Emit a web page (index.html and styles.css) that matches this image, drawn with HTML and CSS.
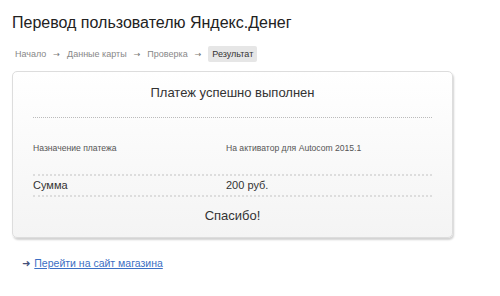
FILE: index.html
```html
<!DOCTYPE html>
<html>

<head>
    <meta charset="utf-8">
    <link rel="stylesheet" href="styles.css">
</head>

<body>
    <h1 class="title">Перевод пользователю Яндекс.Денег</h1>

    <div class="steps">
        <span class="step">Начало</span>
        <span class="arrow">&rarr;</span>
        <span class="step">Данные карты</span>
        <span class="arrow">&rarr;</span>
        <span class="step">Проверка</span>
        <span class="arrow">&rarr;</span>
        <span class="step current">Результат</span>
    </div>

    <div class="card">
        <div class="card-head">Платеж успешно выполнен</div>
        <div class="row small">
            <span class="label">Назначение платежа</span>
            <span class="value">На активатор для Autocom 2015.1</span>
        </div>
        <div class="row sum">
            <span class="label">Сумма</span>
            <span class="value">200 руб.</span>
        </div>
        <div class="thanks">Спасибо!</div>
    </div>

    <div class="back">
        <span class="back-arrow">&#10140;</span>
        <a href="#">Перейти на сайт магазина</a>
    </div>
</body>

</html>
```

FILE: styles.css
```css
body {
    margin: 0;
    padding: 0 12px;
    font-family: Arial, "Liberation Sans", sans-serif;
    color: #333;
    background: #fff;
}

* {
    box-sizing: border-box;
}

/* Page title */

.title {
    margin: 0;
    padding-top: 12px;
    font-size: 16px;
    font-weight: normal;
    color: #222;
    line-height: 22px;
}

/* Steps of the payment */

.steps {
    display: flex;
    align-items: center;
    margin-top: 12px;
    padding-left: 3px;
    font-size: 9px;
    color: #888;
    height: 16px;
}

.arrow {
    margin: 0 7px;
    font-family: "DejaVu Sans", sans-serif;
    font-size: 8px;
    color: #777;
}

.step.current {
    background: #e6e6e6;
    color: #333;
    padding: 3px 4px;
    border-radius: 2px;
}

/* Result card */

.card {
    margin-top: 9px;
    width: 441px;
    border: 1px solid #ddd;
    border-radius: 5px;
    background: linear-gradient(#fff, #f4f4f4);
    box-shadow: 1px 2px 2px rgba(0, 0, 0, 0.18);
    padding: 0 20px;
}

.card-head {
    text-align: center;
    font-size: 13px;
    color: #333;
    padding: 13px 0 17px;
    border-bottom: 1px dotted #bbb;
}

.row {
    display: flex;
}

.row .label {
    width: 193px;
}

.row.small {
    font-size: 8.6px;
    color: #555;
    padding: 25px 0 21px;
    border-bottom: 2px dotted #ddd;
}

.row.sum {
    font-size: 11px;
    color: #333;
    padding: 3px 0 4px;
    border-bottom: 2px dotted #ddd;
}

.thanks {
    text-align: center;
    font-size: 13px;
    padding: 11px 0 14px;
}

/* Link back to shop */

.back {
    margin-top: 19px;
    padding-left: 10px;
    font-size: 10.5px;
}

.back-arrow {
    color: #44507a;
    font-family: "DejaVu Sans", sans-serif;
    font-size: 10px;
    margin-right: 1px;
}

.back a {
    color: #3b6fc4;
}
```
